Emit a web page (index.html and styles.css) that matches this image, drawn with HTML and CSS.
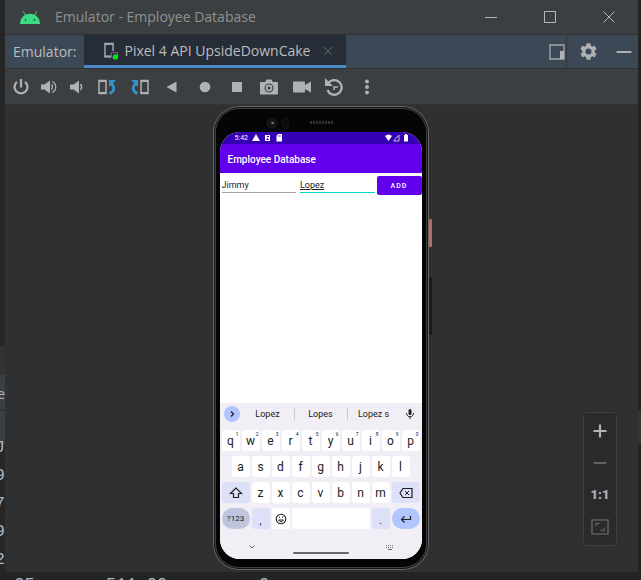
FILE: index.html
```html
<!DOCTYPE html>
<html lang="en">
<head>
<meta charset="utf-8">
<title>Emulator - Employee Database</title>
<link rel="stylesheet" href="styles.css">
</head>
<body>
<div class="desktop">
  <div class="behind-left">
    <span class="panel-text">e</span>
    <span class="code-text">J<br>9<br>7<br>9<br>2</span>
  </div>

  <main class="window">
    <header class="titlebar">
      <svg class="android" viewBox="0 0 20 13" width="20" height="13"><path d="M3 0.500L5.400 4M17 0.500L14.600 4" stroke="#3ddc84" stroke-width="1" fill="none"/><path d="M0 13C.3 6.500 4.500 2.800 10 2.800S19.700 6.500 20 13z" fill="#3ddc84"/><circle cx="5.500" cy="9" r=".9" fill="#2f5a45"/><circle cx="14.500" cy="9" r=".9" fill="#2f5a45"/></svg>
      <h1 class="title">Emulator - Employee Database</h1>
      <div class="window-controls">
        <button aria-label="Minimize"><svg viewBox="0 0 14 14" width="14" height="14"><path d="M1 7.500H13" stroke="#b4b6b7"/></svg></button>
        <button aria-label="Maximize"><svg viewBox="0 0 14 14" width="14" height="14"><path d="M1.500 1.500h11v11h-11z" stroke="#b4b6b7" fill="none"/></svg></button>
        <button aria-label="Close"><svg viewBox="0 0 14 14" width="14" height="14"><path d="M1.500 1.500l11 11M12.500 1.500l-11 11" stroke="#b4b6b7"/></svg></button>
      </div>
    </header>

    <nav class="tabbar">
      <span class="tabbar-label">Emulator:</span>
      <div class="tab">
        <svg viewBox="0 0 16 18" width="16" height="18"><path d="M10 9V1.500H2V14.500H8" fill="none" stroke="#9aa7b0" stroke-width="1.500"/><path d="M1.300 1h9.400v2H1.300zM1.300 13.500h6.700v2H1.300z" fill="#9aa7b0"/><path d="M8.500 10.500h6v5h-6z" fill="none" stroke="#765b91"/><circle cx="12.500" cy="15" r="2.700" fill="#00e51a"/></svg>
        <span>Pixel 4 API UpsideDownCake</span>
        <button class="tab-close" aria-label="Close tab"><svg viewBox="0 0 10 10" width="10" height="10"><path d="M1 1l8 8M9 1L1 9" stroke="#626b72"/></svg></button>
      </div>
      <div class="tab-actions">
        <button class="dock" aria-label="Window mode"><svg viewBox="0 0 16 16" width="16" height="16"><path d="M1 1h14v14H1z" fill="none" stroke="#a5a8aa" stroke-width="1.300"/><path d="M11 7h4v8h-4z" fill="#afb1b3"/></svg></button>
        <button class="settings" aria-label="Settings"><svg viewBox="2 2 20 20" width="17" height="17"><path fill="#afb1b3" d="M19.140 12.940c.04-.3.060-.61.060-.94s-.02-.64-.07-.94l2.030-1.580a.49.490 0 0 0 .12-.61l-1.920-3.320a.49.490 0 0 0-.59-.22l-2.390.96c-.5-.38-1.030-.7-1.620-.94l-.36-2.540a.48.480 0 0 0-.48-.41h-3.840a.48.480 0 0 0-.47.410l-.36 2.540c-.59.240-1.130.570-1.620.940l-2.390-.96a.49.490 0 0 0-.59.220L2.740 8.870a.48.480 0 0 0 .12.610l2.030 1.580c-.05.300-.09.630-.09.940s.02.640.07.940l-2.030 1.580a.49.490 0 0 0-.12.610l1.920 3.320c.12.220.37.290.59.220l2.390-.96c.5.380 1.030.7 1.620.94l.36 2.540c.05.240.24.410.48.410h3.840c.24 0 .44-.17.470-.41l.36-2.540c.59-.24 1.130-.56 1.620-.94l2.390.96c.22.080.47 0 .59-.22l1.920-3.320a.49.490 0 0 0-.12-.61zM12 15.600a3.600 3.600 0 1 1 0-7.200 3.600 3.600 0 0 1 0 7.200z"/></svg></button>
        <button class="hide" aria-label="Hide"><svg viewBox="0 0 16 16" width="16" height="16"><path d="M.5 8h15" stroke="#afb1b3" stroke-width="2"/></svg></button>
      </div>
    </nav>

    <div class="toolbar">
      <div class="tools tools-hardware">
        <button aria-label="Power"><svg viewBox="0 0 16 16" width="16" height="16"><path d="M8 0v8.500" stroke="#afb1b3" stroke-width="2.200"/><path d="M4 2.800a6.500 6.500 0 1 0 8 0" fill="none" stroke="#afb1b3" stroke-width="2.200"/></svg></button>
        <button aria-label="Volume up"><svg viewBox="0 0 18 16" width="18" height="16"><path d="M1 5.500h3.500L10 1.500v13L4.500 10.500H1z" fill="#afb1b3"/><path d="M11.500 5.500q2 2.500 0 5M12 2.500c5 2 5 9 0 11" fill="none" stroke="#afb1b3" stroke-width="1.300"/></svg></button>
        <button aria-label="Volume down"><svg viewBox="0 0 16 16" width="16" height="16"><path d="M1 5.500h3.500L10 1.500v13L4.500 10.500H1z" fill="#afb1b3"/><path d="M11.500 5q2.200 3 0 6" fill="none" stroke="#afb1b3" stroke-width="1.500"/></svg></button>
      </div>
      <div class="tools tools-actions">
        <button aria-label="Rotate left"><svg viewBox="0 0 18 16" width="18" height="16"><path d="M1 1.500h7v13H1z" fill="none" stroke="#afb1b3" stroke-width="1.500"/><path d="M1 1h7v2H1zM1 13h7v2H1z" fill="#afb1b3"/><path d="M11.500 14.500c5-2 5.500-6 2-10" fill="none" stroke="#3592c4" stroke-width="2.800"/><path d="M11 1h7l-7 7z" fill="#3592c4"/></svg></button>
        <button aria-label="Rotate right"><svg viewBox="0 0 18 16" width="18" height="16"><path d="M10 1.500h7v13h-7z" fill="none" stroke="#afb1b3" stroke-width="1.500"/><path d="M10 1h7v2h-7zM10 13h7v2h-7z" fill="#afb1b3"/><path d="M6.500 14.500c-5-2-5.500-6-2-10" fill="none" stroke="#3592c4" stroke-width="2.800"/><path d="M7 1H0l7 7z" fill="#3592c4"/></svg></button>
        <button aria-label="Back"><svg viewBox="0 0 16 16" width="16" height="16"><path d="M12.500 2.500v11L2.500 8z" fill="#afb1b3"/></svg></button>
        <button aria-label="Home"><svg viewBox="0 0 16 16" width="16" height="16"><circle cx="8" cy="8" r="5.300" fill="#afb1b3"/></svg></button>
        <button aria-label="Overview"><svg viewBox="0 0 16 16" width="16" height="16"><path d="M3 3h10v10H3z" fill="#afb1b3"/></svg></button>
        <button aria-label="Screenshot"><svg viewBox="0 0 18 16" width="18" height="16"><path fill-rule="evenodd" fill="#afb1b3" d="M1 3h4.200l1.500-2.500h4.600L12.800 3H17q1 0 1 1v10.500q0 1-1 1H1q-1 0-1-1V4q0-1 1-1zM9 4.500a4.500 4.500 0 1 0 0 9 4.500 4.500 0 0 0 0-9z"/><circle cx="9" cy="9" r="2.500" fill="none" stroke="#afb1b3" stroke-width="1.800"/></svg></button>
        <button aria-label="Record"><svg viewBox="0 0 18 14" width="18" height="14"><path fill="#afb1b3" d="M1 1.500h10q1 0 1 1V5l6-3.500v11L12 9v2.500q0 1-1 1H1q-1 0-1-1v-9q0-1 1-1z"/></svg></button>
        <button aria-label="Snapshots"><svg viewBox="0 0 18 18" width="18" height="18"><path d="M3.200 5.500A7.300 7.300 0 1 1 2.500 12" fill="none" stroke="#afb1b3" stroke-width="2.300"/><path d="M0 0v8h8z" fill="#afb1b3"/><path d="M9 12V9h4" fill="none" stroke="#afb1b3" stroke-width="1.500"/></svg></button>
        <button aria-label="More"><svg viewBox="0 0 16 16" width="16" height="16"><g fill="#afb1b3"><circle cx="8" cy="2.500" r="2"/><circle cx="8" cy="8" r="2"/><circle cx="8" cy="13.500" r="2"/></g></svg></button>
      </div>
    </div>

    <section class="canvas">
      <div class="phone">
        <span class="side-key power"></span>
        <span class="side-key volume"></span>
        <div class="bezel-top">
          <svg viewBox="0 0 202 24" width="202" height="24"><circle cx="52" cy="17" r="5" fill="#101113" stroke="#1c1d1f"/><circle cx="52" cy="17" r="2" fill="#2a2f3a"/><circle cx="53" cy="17" r="1" fill="#777d88"/><rect x="63" y="12" width="5" height="10" rx="2" fill="#070707" stroke="#1b1b1b"/><path d="M90 16.500h23" stroke="#333" stroke-width="3" stroke-dasharray="2 1"/></svg>
        </div>
        <div class="screen">
          <div class="status">
            <span class="clock">5:42</span>
            <svg class="status-left" viewBox="0 0 32 8" width="32" height="8"><path d="M4 0l4 7H0z" fill="#fff"/><path d="M13 1h5v6h-5z" fill="#fff"/><path d="M14 6l1.500-2L17 6M15 2h2v1h-2z" fill="#3700b3"/><path d="M26 0h4v7.500h-5.500V2z" fill="#fff"/><path d="M26 2h3" stroke="#3700b3" stroke-width=".7"/></svg>
            <svg class="status-right" viewBox="0 0 24 8" width="24" height="8"><path d="M0 2q3.500-3 7 0L3.500 7z" fill="#fff"/><path d="M14 1v6H8.500z" fill="none" stroke="#c7b6ec"/><path d="M19 1h1V0h2v1h1v6.500h-4z" fill="#fff"/></svg>
          </div>
          <div class="appbar">Employee Database</div>
          <form class="entry">
            <input aria-label="First name" value="Jimmy">
            <input class="focused" aria-label="Last name" value="Lopez">
            <button type="button" class="add">ADD</button>
          </form>
          <div class="keyboard">
            <div class="suggestions">
              <button class="expand" aria-label="Expand"><svg viewBox="0 0 8 8" width="8" height="8"><path d="M3 1.500L5.500 4 3 6.500" fill="none" stroke="#202124" stroke-width="1.300"/></svg></button>
              <button class="word">Lopez</button>
              <button class="word">Lopes</button>
              <button class="word">Lopez s</button>
              <button class="mic" aria-label="Voice"><svg viewBox="0 0 10 12" width="10" height="12"><rect x="3.500" y="1" width="3" height="6" rx="1.500" fill="#202124"/><path d="M1.500 5c0 5 7 5 7 0M5 8.500v2.500" fill="none" stroke="#202124"/></svg></button>
            </div>
            <div class="keys">
              <button>q<sup>1</sup></button><button>w<sup>2</sup></button><button>e<sup>3</sup></button><button>r<sup>4</sup></button><button>t<sup>5</sup></button><button>y<sup>6</sup></button><button>u<sup>7</sup></button><button>i<sup>8</sup></button><button>o<sup>9</sup></button><button>p<sup>0</sup></button>
            </div>
            <div class="keys keys-home">
              <button>a</button><button>s</button><button>d</button><button>f</button><button>g</button><button>h</button><button>j</button><button>k</button><button>l</button>
            </div>
            <div class="keys">
              <button class="wide tint" aria-label="Shift"><svg viewBox="0 0 14 12" width="14" height="12"><path d="M7 1L1.500 6.500H4.500V10.500h5V6.500h3z" fill="none" stroke="#202124" stroke-width="1.200"/></svg></button><button>z</button><button>x</button><button>c</button><button>v</button><button>b</button><button>n</button><button>m</button><button class="wide tint" aria-label="Backspace"><svg viewBox="0 0 14 12" width="14" height="12"><path d="M4 1.500h9v9H4L1 6z" fill="none" stroke="#202124" stroke-width="1.200"/><path d="M6 4l4 4M10 4L6 8" stroke="#202124"/></svg></button>
            </div>
            <div class="keys">
              <button class="wide pill symbols">?123</button><button class="tint low">,</button><button aria-label="Emoji"><svg viewBox="0 0 12 12" width="12" height="12"><circle cx="6" cy="6" r="4.800" fill="none" stroke="#202124" stroke-width="1.100"/><path d="M3.500 7q2.500 3.500 5 0z" fill="none" stroke="#202124"/><path d="M4 3.500h1v1.300H4zM7 3.500h1v1.300H7z" fill="#202124"/></svg></button><button class="space" aria-label="Space"></button><button class="tint low">.</button><button class="wide pill enter" aria-label="Enter"><svg viewBox="0 0 12 10" width="12" height="10"><path d="M10.500 2v3.500H2M4.500 2.500l-3 3 3 3" fill="none" stroke="#202124" stroke-width="1.200"/></svg></button>
            </div>
            <div class="gesture">
              <svg viewBox="0 0 8 8" width="8" height="8"><path d="M1.500 2.500L4 5l2.500-2.500" fill="none" stroke="#66656b"/></svg>
              <span class="handle"></span>
              <svg viewBox="0 0 8 8" width="8" height="8"><path d="M0 2.500h8M0 4.500h8" stroke="#77757d" stroke-dasharray="1 1"/><path d="M2 6.500h4" stroke="#66656b"/></svg>
            </div>
          </div>
        </div>
      </div>

      <div class="zoom-panel">
        <button aria-label="Zoom in"><svg viewBox="0 0 14 14" width="14" height="14"><path d="M7 .5v13M.5 7h13" stroke="#afb1b3" stroke-width="2.200"/></svg></button>
        <button aria-label="Zoom out"><svg viewBox="0 0 14 14" width="14" height="14"><path d="M.5 7h13" stroke="#5e6061" stroke-width="2.200"/></svg></button>
        <button class="actual">1:1</button>
        <button aria-label="Zoom to fit"><svg viewBox="0 0 18 16" width="18" height="16"><path d="M1 1h16v14H1z" fill="none" stroke="#5b5d5e" stroke-width="1.600"/><path d="M5 7V4.500h3.500M13 9v2.500H9.500" fill="none" stroke="#5b5d5e" stroke-width="1.500"/></svg></button>
      </div>
    </section>
  </main>

  <div class="behind-right"></div>
  <div class="behind-bottom"> 05       511 00       : 0</div>
</div>
</body>
</html>
```
FILE: styles.css
```css
* { box-sizing: border-box; }
body { margin: 0; background: #262626; font-family: "Open Sans", sans-serif; }
button { border: 0; padding: 0; margin: 0; background: none; color: inherit; font: inherit; display: flex; align-items: center; justify-content: center; }
svg { display: block; flex: none; }

.desktop { display: grid; grid-template-columns: 5px 1fr 3px; grid-template-rows: 1fr 8px; min-height: 100vh; }
.behind-left { position: relative; overflow: hidden; background: linear-gradient(#262626 346px, #313335 346px 375px, #3c3f41 375px 409px, #313335 409px 411px, #3c3f41 411px 444px, #262626 444px); color: #a9b7c6; }
.panel-text { position: absolute; right: 0; top: 385px; font-size: 14px; line-height: 18px; }
.code-text { position: absolute; right: 0; top: 434px; font: 17px/28px "Liberation Mono", monospace; }
.behind-right { background: linear-gradient(#262423 410px, #333436 410px 444px, #242424 444px); }
.behind-bottom { grid-column: 1 / -1; height: 8px; overflow: hidden; padding: 5px 0 0 4px; background: #242424; color: #a9b7c6; font: 17px/16px "Liberation Mono", monospace; white-space: pre; }

.window { display: flex; flex-direction: column; min-width: 0; background: #3c3f41; }
.titlebar { display: flex; align-items: center; height: 35px; padding-left: 15px; border-bottom: 1px solid #2f3133; }
.title { flex: 1; margin: 0 0 0 15px; font-size: 14px; font-weight: 400; line-height: 20px; color: #8f9192; white-space: nowrap; }
.window-controls { display: flex; }
.window-controls button { width: 59px; height: 34px; }

.tabbar { display: flex; height: 34px; background: #3d4856; border-bottom: 1px solid #2f3133; color: #bbbdbf; font-size: 14px; line-height: 20px; white-space: nowrap; }
.tabbar-label { padding: 7px 8px 0; }
.tab { display: flex; align-items: center; gap: 5px; padding: 2px 13px 0 19px; background: #262d37; border-bottom: 3px solid #4a88c7; }
.tab-close { margin-left: 8px; }
.tab-actions { display: flex; margin-left: auto; }
.tab-actions .dock { padding-right: 1px; border-right: 1px solid #33373c; }
.tab-actions .settings { width: 42px; }
.tab-actions .hide { width: 29px; }

.toolbar { display: flex; height: 36px; padding-left: 2px; border-bottom: 1px solid #333537; }
.tools { display: grid; }
.tools-hardware { grid-template-columns: repeat(3, 28px); }
.tools-actions { grid-template-columns: repeat(9, 1fr); width: 292px; }

.canvas { position: relative; flex: 1; display: flex; justify-content: center; align-items: flex-start; padding: 1px 2px 2px 0; background: #2f3032; }
.phone { position: relative; width: 216px; height: 464px; padding: 0 7px 11px; background: #050506; border-radius: 26px; box-shadow: inset 0 0 0 1px #686868, inset 0 0 0 2px #151515, inset 0 0 0 3px #3f3f3f; }
.side-key { position: absolute; left: 100%; width: 3px; border-radius: 1px; }
.power { top: 113px; height: 28px; background: #b96d60; }
.volume { top: 171px; height: 58px; background: #1a1b1c; }
.bezel-top { height: 26px; }
.screen { display: flex; flex-direction: column; height: 427px; overflow: hidden; border-radius: 20px; background: #fff; font-family: Roboto, sans-serif; color: #202124; }
.status { display: flex; align-items: center; height: 12px; padding: 0 13px 0 15px; background: #3700b3; color: #fff; }
.clock { font-size: 7px; line-height: 12px; }
.status-left { margin-left: 4px; }
.status-right { margin-left: auto; }
.appbar { height: 29px; padding-left: 8px; background: #6200ee; color: #fff; font-size: 10px; font-weight: 500; line-height: 31px; }
.entry { display: flex; align-items: flex-start; gap: 4px; padding: 3px 0 0 2px; }
.entry input { flex: 1; min-width: 0; height: 17px; padding: 2px 0 0; border: 0; border-bottom: 1px solid #a5a5a5; border-radius: 0; outline: 0; background: none; font: 9px/12px Roboto, sans-serif; color: #202124; }
.entry .focused { border-bottom-color: #03dac5; text-decoration: underline; }
.entry .add { width: 45px; height: 19px; margin-left: -2px; border-radius: 2px; background: #6200ee; color: #fff; font-size: 7px; font-weight: 500; letter-spacing: 1px; }

.keyboard { display: flex; flex-direction: column; gap: 5px; margin-top: auto; height: 156px; padding: 0 2px; background: #f1eff5; }
.suggestions { display: flex; align-items: center; height: 22px; font-size: 9px; }
.expand { width: 16px; height: 16px; margin: 0 2px; border-radius: 50%; background: #b1c5ff; }
.word { flex: 1; height: 12px; }
.word + .word { border-left: 1px solid #c9c8ce; }
.mic { width: 20px; }
.keys { display: flex; gap: 2px; height: 21px; }
.keys-home { padding: 0 10px; }
.keys button { position: relative; flex: 0 0 18px; border-radius: 3px; background: #fff; font-size: 12px; line-height: 20px; }
.keys sup { position: absolute; top: 1px; right: 1px; font-size: 5px; line-height: 6px; }
.keys .wide { flex-basis: 28px; }
.keys .tint { background: #dde1f8; }
.keys .low { padding-top: 4px; font-size: 10px; }
.keys .space { flex: 1; }
.keys .pill { border-radius: 11px; }
.keys .symbols { background: #bfc5dd; font-size: 8px; }
.keys .enter { background: #b1c5ff; }
.gesture { display: flex; justify-content: space-between; align-items: flex-start; padding: 9px 26px 0; }
.handle { width: 56px; height: 2px; margin-top: 9px; border-radius: 1px; background: #68676b; }

.zoom-panel { position: absolute; right: 21px; bottom: 26px; display: flex; flex-direction: column; justify-content: space-around; width: 34px; height: 134px; padding: 2px 0; border: 1px solid #3d3e3f; border-radius: 4px; background: #292a2b; color: #afb1b3; }
.zoom-panel button { width: 100%; height: 32px; }
.zoom-panel .actual { font: 900 13px/16px Roboto, sans-serif; }
```
